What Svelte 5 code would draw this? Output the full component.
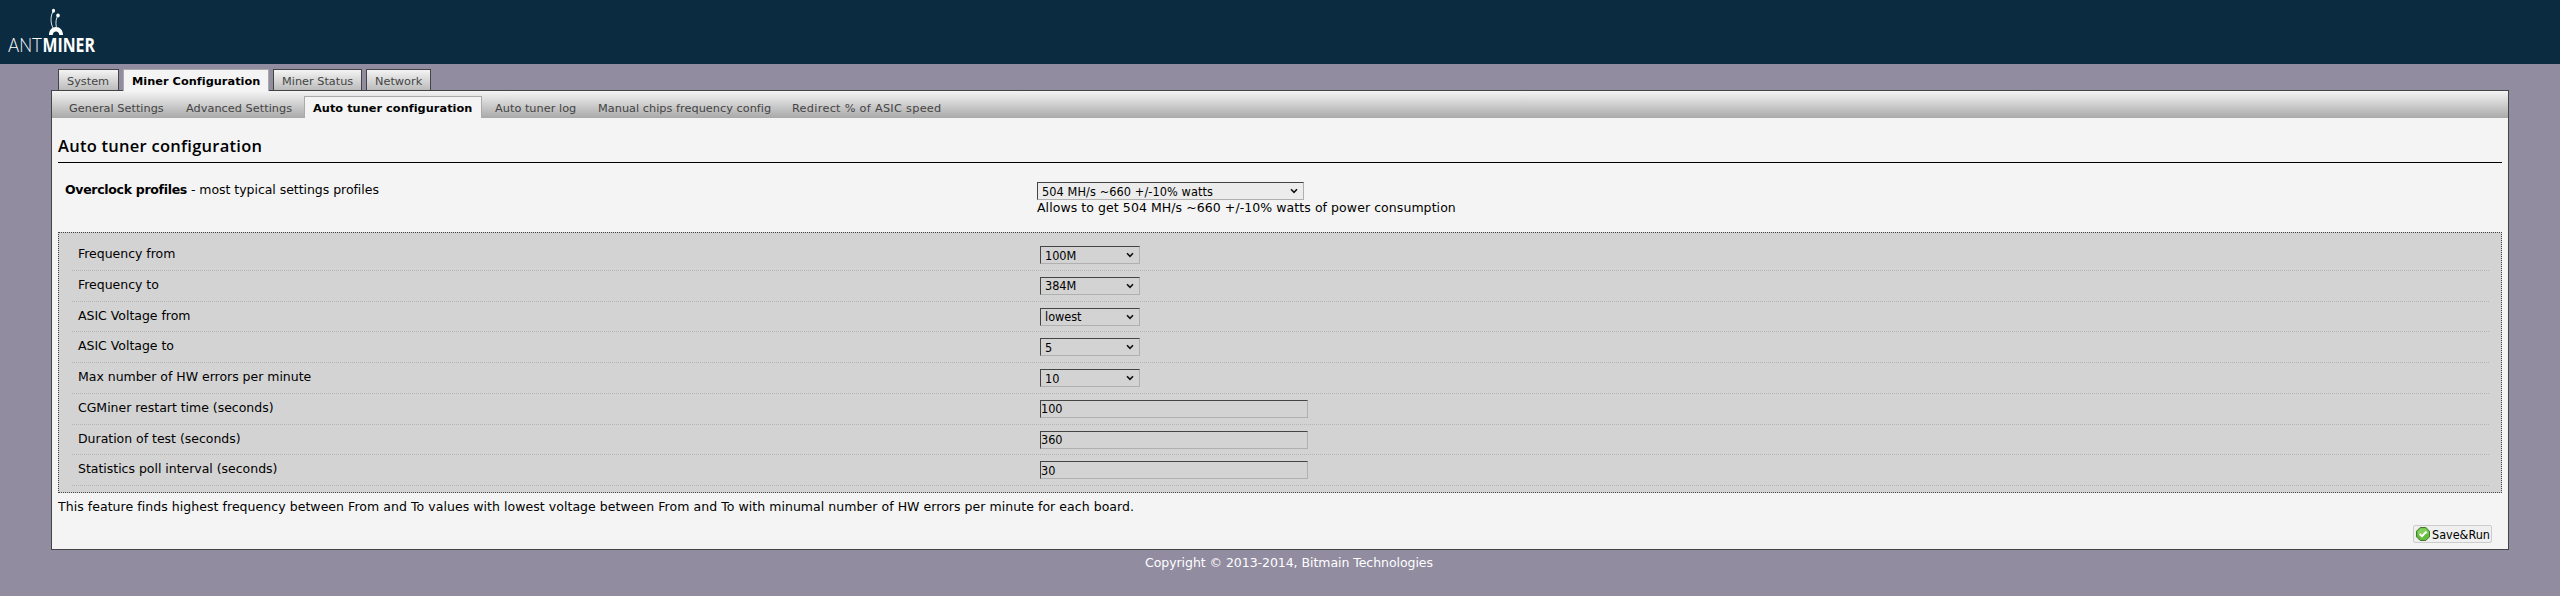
<script>
  const tabs = [
    { label: 'System', width: 61 },
    { label: 'Miner Configuration', width: 146, active: true },
    { label: 'Miner Status', width: 89 },
    { label: 'Network', width: 65 }
  ];
  const subtabs = [
    { label: 'General Settings', width: 117 },
    { label: 'Advanced Settings', width: 128 },
    { label: 'Auto tuner configuration', width: 178, active: true },
    { label: 'Auto tuner log', width: 103, after: true },
    { label: 'Manual chips frequency config', width: 194 },
    { label: 'Redirect % of ASIC speed', width: 170, wide: true }
  ];
  const rows = [
    { label: 'Frequency from', value: '100M', select: true },
    { label: 'Frequency to', value: '384M', select: true },
    { label: 'ASIC Voltage from', value: 'lowest', select: true },
    { label: 'ASIC Voltage to', value: '5', select: true },
    { label: 'Max number of HW errors per minute', value: '10', select: true },
    { label: 'CGMiner restart time (seconds)', value: '100' },
    { label: 'Duration of test (seconds)', value: '360' },
    { label: 'Statistics poll interval (seconds)', value: '30' }
  ];
</script>

{#snippet chevron()}
  <svg class="chevron" width="8" height="6" viewBox="0 0 8 6"><path d="M1 1.2 L4 4.3 L7 1.2" fill="none" stroke="#111" stroke-width="1.6" /></svg>
{/snippet}

<header>
  <svg width="110" height="64" viewBox="0 0 110 64" fill="#fff">
    <path d="M49 35 C49 30 52 27 56 27 C60 27 63 30 63 35 L59.3 35 C59 32.7 58 31.5 56 31.5 C54 31.5 53 32.7 52.7 35 Z" />
    <path d="M53 28 C50.4 23 50.3 16 53.3 11 M56.3 27 C55.5 22.5 56 18.3 58 15.5" fill="none" stroke="#dfe5e9" stroke-width="1" />
    <ellipse cx="53.5" cy="10.8" rx="1.6" ry="2" />
    <ellipse cx="58" cy="15.5" rx="1.8" ry="2" />
    <text class="ant" x="8" y="52" textLength="34" lengthAdjust="spacingAndGlyphs">ANT</text>
    <text class="miner" x="42.5" y="52" textLength="52.5" lengthAdjust="spacingAndGlyphs">MINER</text>
  </svg>
</header>

<nav class="tabs">
  {#each tabs as t}
    <a class:active={t.active} style:width="{t.width}px">{t.label}</a>
  {/each}
</nav>

<main>
  <nav class="subtabs">
    {#each subtabs as t}
      <a class:active={t.active} class:after={t.after} class:wide={t.wide} style:width="{t.width}px">{t.label}</a>
    {/each}
  </nav>
  <div class="content">
    <h2>Auto tuner configuration</h2>
    <div class="profile">
      <div class="profile-label"><b>Overclock profiles</b> - most typical settings profiles</div>
      <div>
        <div class="control profile-select"><span>504 MH/s ~660 +/-10% watts</span>{@render chevron()}</div>
        <p class="hint">Allows to get 504 MH/s ~660 +/-10% watts of power consumption</p>
      </div>
    </div>
    <section>
      {#each rows as r}
        <div class="row">
          <span class="label">{r.label}</span>
          {#if r.select}
            <div class="control small"><span>{r.value}</span>{@render chevron()}</div>
          {:else}
            <div class="control input"><span>{r.value}</span></div>
          {/if}
        </div>
      {/each}
    </section>
    <p class="note">This feature finds highest frequency between From and To values with lowest voltage between From and To with minumal number of HW errors per minute for each board.</p>
    <div class="actions">
      <button>
        <svg width="14" height="14" viewBox="0 0 14 14">
          <path d="M4.2 .5 H9.8 L13.5 4.2 V9.8 L9.8 13.5 H4.2 L.5 9.8 V4.2 Z" fill="#62bd3c" stroke="#45752f" />
          <path d="M4.6 1.6 H9.4 L12.4 4.6 V7 H1.6 V4.6 Z" fill="#82cf5c" />
          <path d="M3.6 7 L6 9.3 L10.4 4.6" fill="none" stroke="#fff" stroke-width="2" />
        </svg>
        <span>Save&amp;Run</span>
      </button>
    </div>
  </div>
</main>
<footer>Copyright © 2013-2014, Bitmain Technologies</footer>

<style>
  :global(body) { background: #918ca0; font: 12.5px/16px "DejaVu Sans", Verdana, sans-serif; color: #000; min-height: 596px; }
  header { height: 64px; background: #0b2b40; margin-bottom: 5px; }
  header svg { display: block; }
  .ant { font: 300 19.5px Lato, sans-serif; }
  .miner { font: 700 19.5px "Open Sans", sans-serif; }
  nav { display: flex; white-space: nowrap; font-size: 11.3px; color: #444; }
  nav a { box-sizing: border-box; flex: none; }
  .tabs { gap: 4px; height: 21px; padding-left: 58px; }
  .tabs a { height: 21px; padding-left: 8px; line-height: 24px; border: 1px solid #444; border-bottom: 0; background: linear-gradient(#f4f4f4, #bbb); }
  .tabs .active { position: relative; height: 22px; letter-spacing: .04px; }
  nav .active { background: #f4f4f4; border: 1px solid #aaa; border-bottom: 0; color: #000; font-weight: bold; }
  main { box-sizing: border-box; width: 2458px; height: 460px; margin-left: 51px; border: 1px solid #444; background: #f4f4f4; }
  .subtabs { height: 27px; box-sizing: border-box; padding: 5px 0 0 17px; background: linear-gradient(#f4f4f4, #a9a9a9); }
  .subtabs a { height: 22px; line-height: 25px; letter-spacing: .02px; }
  .subtabs .active { margin-left: -10px; padding-left: 8px; line-height: 23px; letter-spacing: .05px; }
  .subtabs .after { margin-left: 13px; }
  .subtabs .wide { letter-spacing: .28px; }
  .content { padding: 0 6px; }
  h2 { margin: 0; height: 44px; border-bottom: 1px solid #000; font: 600 16.5px/56px "Open Sans", sans-serif; letter-spacing: .26px; }
  .profile { display: grid; grid-template-columns: 972px 1fr; height: 50px; padding: 19px 0 0 7px; }
  .profile-label { letter-spacing: -.04px; }
  .profile-label b { letter-spacing: -.3px; }
  .control { box-sizing: border-box; display: flex; align-items: center; height: 18px; border: 1px solid #b0b0b0; border-top-color: #444; border-left-color: #444; font: 12.6px/16px "DejaVu Sans Condensed", Tahoma, sans-serif; padding-left: 4px; }
  .control span { padding-top: 1px; }
  .chevron { margin-left: auto; margin-right: 5px; }
  .profile-select { width: 267px; background: #ececec; letter-spacing: .09px; }
  .hint { margin: 0; letter-spacing: .07px; }
  section { box-sizing: border-box; height: 261px; border: 1px dotted #444; background: #d3d3d3; padding: 7px 12px 0 13px; }
  .row { box-sizing: border-box; display: grid; grid-template-columns: 962px 1fr; height: 30.75px; padding: 6px 0 0 6px; border-bottom: 1px dotted #b5b5b5; letter-spacing: -.02px; }
  .small { width: 100px; }
  .input { width: 268px; padding-left: 0; }
  .note { margin: 6px 0 0; letter-spacing: .05px; }
  .actions { display: flex; justify-content: flex-end; padding: 10px 10px 0 0; }
  button { box-sizing: border-box; display: flex; align-items: center; gap: 2px; width: 79px; height: 18px; margin: 0; padding: 0 1px 0 2px; border: 1px solid #ccc; border-radius: 2px; background: #efefef; color: #000; font: 12.5px/16px "DejaVu Sans Condensed", Tahoma, sans-serif; white-space: nowrap; }
  button svg { flex: none; }
  button span { padding-top: 1px; }
  footer { padding: 5px 0 0 1145px; color: #fff; letter-spacing: -.05px; }
</style>
